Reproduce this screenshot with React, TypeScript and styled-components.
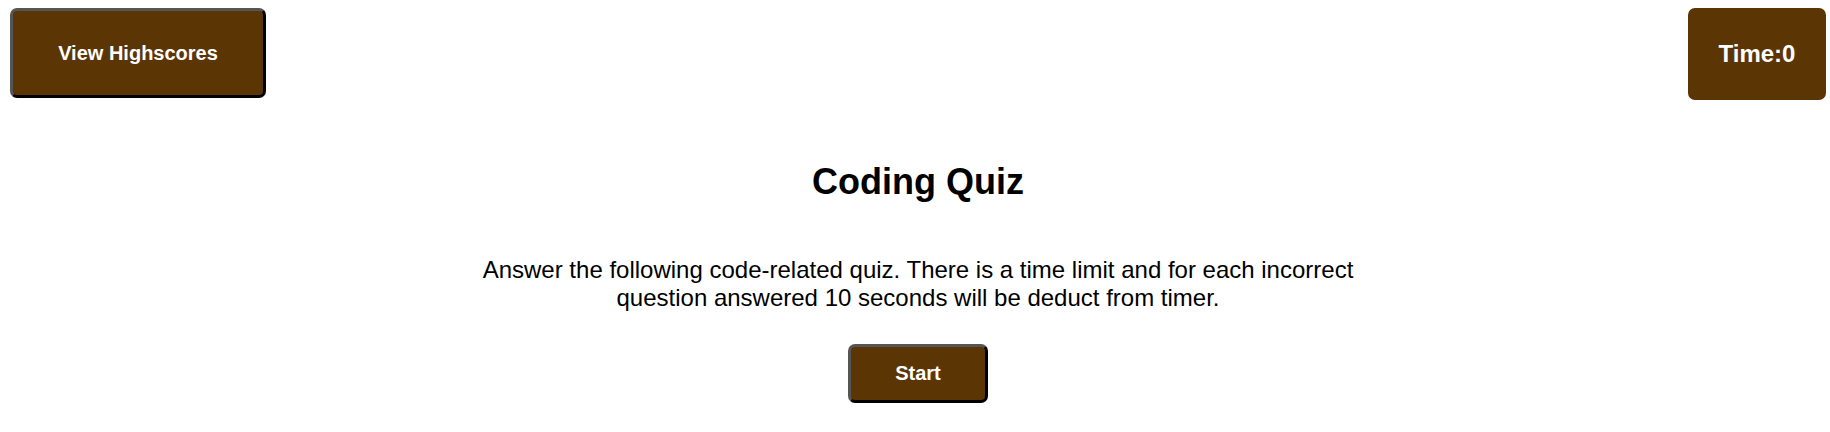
import React from 'react';
import styled, { createGlobalStyle } from 'styled-components';

const GlobalStyle = createGlobalStyle`
  html, body {
    margin: 0;
    padding: 0;
    background: #ffffff;
    font-family: "Liberation Sans", Arial, sans-serif;
    color: #000000;
  }
`;

const brown = '#5c3505';

const Header = styled.header`
  display: flex;
  justify-content: space-between;
  align-items: flex-start;
  padding: 8px 4px 0 10px;
`;

const Button = styled.button<{ $w: number; $h: number }>`
  width: ${(p) => p.$w}px;
  height: ${(p) => p.$h}px;
  background: ${brown};
  color: #ffffff;
  font-family: "Liberation Sans", Arial, sans-serif;
  font-weight: bold;
  font-size: 20px;
  border: 3px solid;
  border-color: #555555 #000000 #000000 #555555;
  border-radius: 7px;
  padding: 0;
  cursor: pointer;
`;

const Timer = styled.div`
  width: 138px;
  height: 92px;
  background: ${brown};
  color: #ffffff;
  font-weight: bold;
  font-size: 24px;
  border-radius: 7px;
  display: flex;
  align-items: center;
  justify-content: center;
`;

const Main = styled.main`
  display: flex;
  flex-direction: column;
  align-items: center;
  padding: 62px 0 0 6px;
`;

const Title = styled.h1`
  margin: 0;
  font-size: 36px;
  line-height: 40px;
  font-weight: bold;
`;

const Intro = styled.p`
  width: 915px;
  margin: 54px 0 32px;
  font-size: 24px;
  text-align: center;
`;

export default function App() {
  return (
    <>
      <GlobalStyle />
      <Header>
        <Button $w={256} $h={90}>View Highscores</Button>
        <Timer>Time:0</Timer>
      </Header>
      <Main>
        <Title>Coding Quiz</Title>
        <Intro>
          Answer the following code-related quiz. There is a time limit and for each incorrect
          question answered 10 seconds will be deduct from timer.
        </Intro>
        <Button $w={140} $h={59}>Start</Button>
      </Main>
    </>
  );
}
